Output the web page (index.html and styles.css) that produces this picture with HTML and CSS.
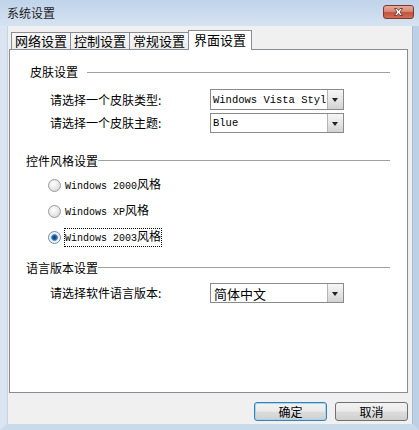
FILE: index.html
```html
<!DOCTYPE html>
<html lang="zh-CN">
<head>
    <meta charset="UTF-8">
    <title>系统设置</title>
    <link rel="stylesheet" href="styles.css">
</head>
<body>
    <div class="window">
        <div class="titlebar">
            <span class="title">系统设置</span>
            <span class="close-btn">
                <svg width="31" height="14" viewBox="0 0 31 14">
                    <path d="M11.5 3.5 L14 3.5 L15.5 5.5 L17 3.5 L19.5 3.5 L17 7 L19.5 10.5 L17 10.5 L15.5 8.5 L14 10.5 L11.5 10.5 L14 7 Z" fill="#fff" stroke="#5a2a24" stroke-width="0.8" stroke-linejoin="round"/>
                </svg>
            </span>
        </div>

        <div class="frame">
            <div class="tabs">
                <div class="tab">网络设置</div>
                <div class="tab">控制设置</div>
                <div class="tab">常规设置</div>
                <div class="tab active">界面设置</div>
            </div>

            <div class="page">
                <!-- 皮肤设置 -->
                <div class="group-title first">
                    <span>皮肤设置</span>
                    <span class="line"></span>
                </div>
                <div class="row row-first">
                    <label>请选择一个皮肤类型:</label>
                    <div class="combo">
                        <span class="value en">Windows Vista Style</span>
                        <span class="arrow"></span>
                    </div>
                </div>
                <div class="row row-second">
                    <label>请选择一个皮肤主题:</label>
                    <div class="combo">
                        <span class="value en">Blue</span>
                        <span class="arrow"></span>
                    </div>
                </div>

                <!-- 控件风格设置 -->
                <div class="group-title group-style">
                    <span>控件风格设置</span>
                    <span class="line"></span>
                </div>
                <div class="radios">
                    <div class="radio-row">
                        <span class="radio"></span>
                        <span class="radio-text"><span class="en">Windows 2000</span>风格</span>
                    </div>
                    <div class="radio-row">
                        <span class="radio"></span>
                        <span class="radio-text"><span class="en">Windows XP</span>风格</span>
                    </div>
                    <div class="radio-row">
                        <span class="radio checked"></span>
                        <span class="radio-text focused"><span class="en">Windows 2003</span>风格</span>
                    </div>
                </div>

                <!-- 语言版本设置 -->
                <div class="group-title group-lang">
                    <span>语言版本设置</span>
                    <span class="line"></span>
                </div>
                <div class="row row-lang">
                    <label>请选择软件语言版本:</label>
                    <div class="combo combo-lang">
                        <span class="value">简体中文</span>
                        <span class="arrow"></span>
                    </div>
                </div>
            </div>

            <div class="buttons">
                <button class="btn default">确定</button>
                <button class="btn">取消</button>
            </div>
        </div>
    </div>
</body>
</html>
```

FILE: styles.css
```css
* {
    margin: 0;
    padding: 0;
    box-sizing: border-box;
}

body {
    font-family: "Noto Sans CJK SC", "Noto Sans", sans-serif;
    font-size: 12px;
    color: #000;
    background: #fff;
}

.window {
    width: 419px;
    height: 430px;
    display: flex;
    flex-direction: column;
    background: #d8e4f1;
}

.titlebar {
    height: 26px;
    display: flex;
    align-items: center;
    justify-content: space-between;
    background: linear-gradient(180deg, #bfd3ea 0%, #cddcee 60%, #d6e3f2 100%);
    padding: 0 5px 0 7px;
}

.title {
    font-size: 12px;
    line-height: 14px;
    color: #1e1e1e;
}

.close-btn {
    width: 31px;
    height: 14px;
    margin-bottom: 3px;
    border: 1px solid #7a3a32;
    border-radius: 3px;
    background: linear-gradient(180deg, #e9a99b 0%, #d98878 45%, #c4523e 55%, #d26d55 100%);
    display: flex;
    align-items: center;
    justify-content: center;
    overflow: hidden;
}

.close-btn svg {
    display: block;
    flex-shrink: 0;
}

.frame {
    flex: 1;
    display: flex;
    flex-direction: column;
    background: #f0f0f0;
    border-left: 7px solid #dae5f1;
    border-right: 6px solid #bcd0e6;
    border-bottom: 6px solid #c9daeb;
    padding: 4px 5px 0 2px;
    box-shadow: inset 1px 0 0 #c6d3e0, inset -1px 0 0 #a9bcd1;
}

/* 탭 */
.tabs {
    height: 19px;
    display: flex;
    align-items: flex-end;
    padding-left: 2px;
}

.tab {
    height: 17px;
    padding: 0 3px;
    border: 1px solid #898c95;
    border-bottom: none;
    background: linear-gradient(180deg, #f7f7f7 0%, #ececec 100%);
    font-size: 13px;
    line-height: 15px;
    white-space: nowrap;
}

.tab + .tab {
    margin-left: -1px;
}

.tab.active {
    height: 20px;
    margin: 0 -2px -1px -1px;
    padding: 0 5px;
    background: #fff;
    position: relative;
    z-index: 1;
    line-height: 18px;
}

.page {
    height: 344px;
    background: #fff;
    border: 1px solid #898c95;
    padding: 15px 17px 0 16px;
}

.group-title {
    height: 14px;
    display: flex;
    align-items: center;
    line-height: 14px;
    white-space: nowrap;
}

.group-title .line {
    flex: 1;
    height: 0;
    border-top: 1px solid #a0a0a0;
    margin-top: -2px;
}

.group-title.first {
    padding-left: 4px;
    gap: 9px;
}

.group-title.first .line {
    margin-top: 0;
}

.group-style {
    margin-top: 21px;
}

.group-lang {
    margin-top: 11px;
}

.row {
    display: flex;
    align-items: center;
    padding-left: 24px;
}

.row label {
    width: 160px;
    font-size: 12px;
    line-height: 14px;
}

.row-first {
    margin-top: 10px;
}

.row-second {
    margin-top: 3px;
}

.row-lang {
    margin-top: 8px;
}

.combo {
    width: 134px;
    height: 21px;
    border: 1px solid #8a8a8a;
    background: #fff;
    display: flex;
    align-items: stretch;
}

.row-second .combo,
.combo-lang {
    height: 20px;
}

.combo .value {
    flex: 1;
    overflow: hidden;
    white-space: nowrap;
    padding-left: 2px;
    display: flex;
    align-items: center;
}

.combo .value.en {
    font-size: 10.5px;
}

.combo-lang .value {
    font-size: 13px;
    padding-left: 3px;
}

.combo .arrow {
    width: 16px;
    flex-shrink: 0;
    border-left: 1px solid #b5b5b5;
    background: linear-gradient(180deg, #f6f6f6 0%, #e6e6e6 50%, #d2d2d2 100%);
    position: relative;
}

.combo .arrow::after {
    content: "";
    position: absolute;
    left: 4px;
    top: 8px;
    border-left: 3.5px solid transparent;
    border-right: 3.5px solid transparent;
    border-top: 4px solid #222;
}

.en {
    font-family: "Liberation Mono", "DejaVu Sans Mono", monospace;
    font-size: 10px;
}

/* 라디오 */
.radios {
    margin-top: 4px;
    padding-left: 22px;
}

.radio-row {
    height: 26px;
    display: flex;
    align-items: center;
    gap: 3px;
}

.radio {
    width: 13px;
    height: 13px;
    border-radius: 50%;
    border: 1px solid #9a9a9a;
    background: radial-gradient(circle at 40% 35%, #ffffff 0%, #e6e6e6 55%, #c9c9c9 100%);
    flex-shrink: 0;
}

.radio.checked {
    border-color: #6d8aa8;
    background: radial-gradient(circle at 50% 50%, #0f3b66 0%, #1f5d97 25%, #5e9ad0 40%, #e4eef7 48%, #f3f3f3 70%, #c7cfd7 100%);
}

.radio-text {
    font-size: 12px;
    line-height: 14px;
    white-space: nowrap;
    border: 1px solid transparent;
}

.radio-text.focused {
    border: 1px dotted #000;
}

/* 버튼 */
.buttons {
    margin-top: 9px;
    display: flex;
    justify-content: flex-end;
    gap: 8px;
}

.btn {
    width: 73px;
    height: 19px;
    font-family: "Noto Sans CJK SC", sans-serif;
    font-size: 12px;
    line-height: 15px;
    border: 1px solid #707070;
    border-radius: 3px;
    background: linear-gradient(180deg, #f2f2f2 0%, #ebebeb 48%, #dddddd 52%, #cfcfcf 100%);
    color: #000;
}

.btn.default {
    border-color: #3c7fb1;
    box-shadow: inset 0 0 0 1px #9fd5f5;
}
```
